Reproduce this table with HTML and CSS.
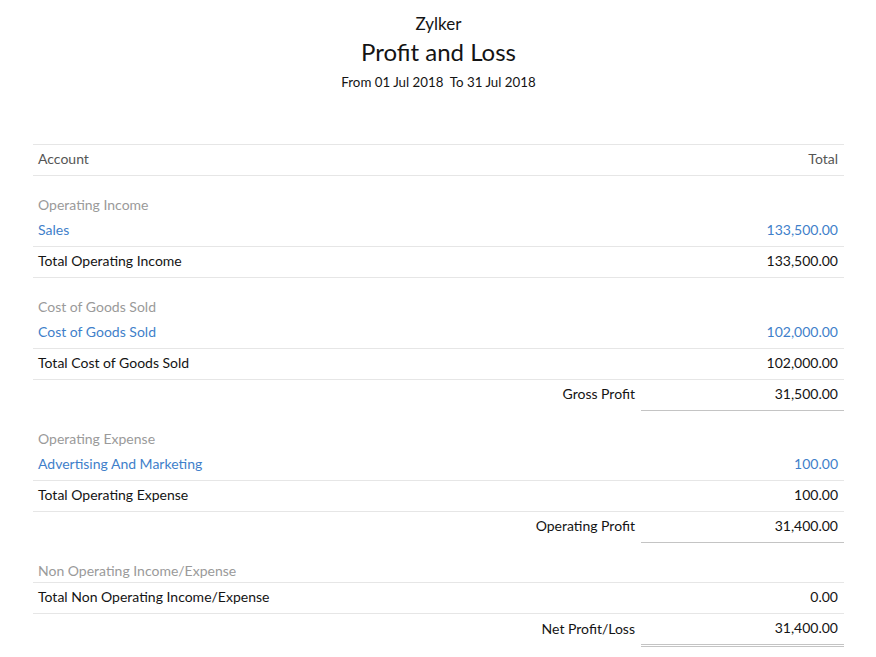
FILE: index.html
```html
<!DOCTYPE html>
<html>
<head>
<meta charset="utf-8">
<link rel="stylesheet" href="styles.css">
</head>
<body>
<div class="report">
  <div class="report-head">
    <div class="org">Zylker</div>
    <div class="title">Profit and Loss</div>
    <div class="period">From 01 Jul 2018&nbsp; To 31 Jul 2018</div>
  </div>
  <table class="pl">
    <colgroup>
      <col class="c1">
      <col class="c2">
      <col class="c3">
    </colgroup>
    <thead>
      <tr class="head-row"><th class="lbl">Account</th><th></th><th class="num">Total</th></tr>
    </thead>
    <tbody>
      <tr class="group"><td colspan="3">Operating Income</td></tr>
      <tr class="acct"><td class="lbl" colspan="2">Sales</td><td class="num">133,500.00</td></tr>
      <tr class="total"><td class="lbl" colspan="2">Total Operating Income</td><td class="num">133,500.00</td></tr>

      <tr class="group"><td colspan="3">Cost of Goods Sold</td></tr>
      <tr class="acct"><td class="lbl" colspan="2">Cost of Goods Sold</td><td class="num">102,000.00</td></tr>
      <tr class="total"><td class="lbl" colspan="2">Total Cost of Goods Sold</td><td class="num">102,000.00</td></tr>
      <tr class="summary"><td></td><td class="slbl">Gross Profit</td><td class="num sval">31,500.00</td></tr>

      <tr class="group after-sum"><td colspan="3">Operating Expense</td></tr>
      <tr class="acct"><td class="lbl" colspan="2">Advertising And Marketing</td><td class="num">100.00</td></tr>
      <tr class="total"><td class="lbl" colspan="2">Total Operating Expense</td><td class="num">100.00</td></tr>
      <tr class="summary"><td></td><td class="slbl">Operating Profit</td><td class="num sval">31,400.00</td></tr>

      <tr class="group after-sum"><td colspan="3">Non Operating Income/Expense</td></tr>
      <tr class="total"><td class="lbl" colspan="2">Total Non Operating Income/Expense</td><td class="num">0.00</td></tr>
      <tr class="summary final"><td></td><td class="slbl">Net Profit/Loss</td><td class="num sval">31,400.00</td></tr>
    </tbody>
  </table>
</div>
</body>
</html>
```
FILE: styles.css
```css
html, body {
  margin: 0;
  padding: 0;
  background: #fff;
}
body {
  font-family: "Lato", "Liberation Sans", sans-serif;
  color: #141414;
  font-size: 14px;
}
.report {
  padding: 12px 32px 0 33px;
}
.report-head {
  text-align: center;
  margin-bottom: 52px;
}
.org {
  font-size: 17px;
  line-height: 22px;
  transform: translateY(1px);
}
.title {
  font-size: 24px;
  line-height: 36px;
}
.period {
  font-size: 13.3px;
  line-height: 20px;
  margin-top: 2px;
}
.pl {
  width: 811px;
  border-collapse: collapse;
  table-layout: fixed;
}
.c1 { width: 408px; }
.c2 { width: 200px; }
.c3 { width: 203px; }
.pl th, .pl td {
  padding: 4px 6px 6px 5px;
  line-height: 20px;
  font-weight: normal;
  font-size: 14px;
  white-space: nowrap;
  vertical-align: middle;
}
.head-row th {
  color: #555;
  border-top: 1px solid #e6e6e6;
  border-bottom: 1px solid #e6e6e6;
  text-align: left;
}
.head-row th.num { text-align: right; }
.lbl { text-align: left; }
.num { text-align: right; }
.pl .group td {
  color: #9a9a9a;
  padding-top: 19px;
  padding-bottom: 1px;
}
.pl .group.after-sum td {
  padding-top: 18px;
  padding-bottom: 1px;
}
.acct td {
  color: #3f7fca;
}
.total td {
  border-top: 1px solid #e6e6e6;
  border-bottom: 1px solid #e6e6e6;
}
.summary .slbl {
  text-align: right;
}
.summary .sval {
  border-bottom: 1px solid #c4c4c4;
}
.summary.final .sval {
  border-bottom: 3px double #c4c4c4;
}
```
